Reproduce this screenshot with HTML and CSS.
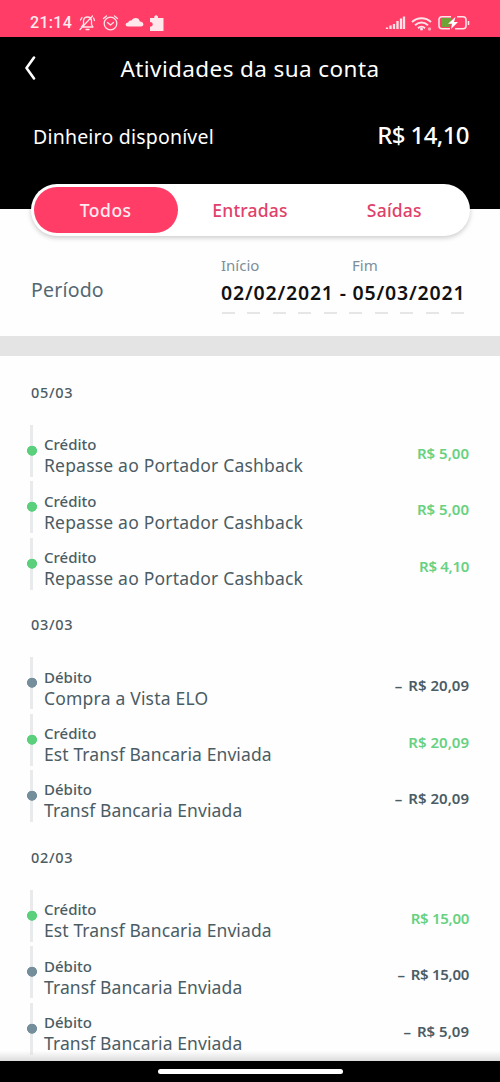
FILE: index.html
```html
<!DOCTYPE html>
<html lang="pt-BR">
<head>
<meta charset="utf-8">
<title>Atividades da sua conta</title>
<link rel="stylesheet" href="styles.css">
</head>
<body>
<div class="screen">
  <div class="status">
    <span class="clock">21:14</span>
    <svg class="status-left" width="88" height="20" viewBox="0 0 88 20" fill="none" stroke="#ffe3e9" stroke-width="1.3" stroke-linecap="round" stroke-linejoin="round">
      <path d="M3.5 14h11.5l-1.5-2.5V8c0-2.5-1.500-4-4-4S5.500 5.500 5.500 8v3.500zM8 16.500h3M2.500 7l1.500-2.500M15.500 5l1 2.500M2 16.500 14.500 3"/>
      <circle cx="32.500" cy="10.500" r="6.300"/>
      <path d="M29.500 9.500l3 2.500 3-2.500M25.500 5.500l3-2.500M36.500 3l3 2.500"/>
      <path fill="#ffe8ec" stroke="none" d="M50 13.500c-3 0-3.300-3.800.2-4 .3-1.800 2-2.500 3.300-1.900C55.500 4 61.300 4.300 61.800 8.500c4.500.2 4.700 5 1.200 5z"/>
      <path fill="#ffe8ec" stroke="none" d="M72 5h4.300C75.500 1.200 80.700 1.200 80 5h5.500v13H72v-4.300c3.700 0 3.700-4.700 0-4.700z"/>
    </svg>
    <svg class="status-right" width="86" height="18" viewBox="0 0 86 18">
      <path stroke="#ffe3e9" stroke-width="2.300" d="M2 14v-1.500M5.500 14v-3.500M9 14V9M12.500 14V6M16 14V3.500M19 14V1.500"/>
      <g fill="none" stroke="#ffe3e9" stroke-width="2"><path d="M27 7c5.500-5 13.500-5 19 0M30 10.300c4-3.400 9-3.400 13 0M33 13.200c2-2 5-2 7 0"/></g>
      <circle cx="36.500" cy="14" r="1.500" fill="#ffe3e9"/><circle cx="44.500" cy="14" r="1.700" fill="#ffa7b9"/>
      <path d="M57 3h10l-3 9h-7z" fill="#6ea337"/>
      <path d="M66 1.700H57q-3 0-3 3v6q0 3 3 3h8M70 13.700h8q3 0 3-3v-6q0-3-3-3h-6M83.500 6v4" fill="none" stroke="#ffe3e9" stroke-width="1.600"/>
      <path d="M70.500 2 63 8.800h4L66 14l7-7h-4z" fill="#fff"/>
    </svg>
  </div>
  <header class="header">
    <div class="title-row">
      <svg class="back" width="12" height="24" viewBox="0 0 12 24"><path d="M10 1.500 2.500 12 10 22.500" fill="none" stroke="#fff" stroke-width="2.600" stroke-linecap="round" stroke-linejoin="round"/></svg>
      <h1 class="title">Atividades da sua conta</h1>
    </div>
    <div class="balance-row"><span class="balance-label">Dinheiro disponível</span><span class="balance">R$ 14,10</span></div>
  </header>
  <nav class="tabs"><span class="tab active">Todos</span><span class="tab">Entradas</span><span class="tab">Saídas</span></nav>
  <section class="period">
    <span class="period-label">Período</span>
    <div class="range">
      <div class="range-labels"><span class="start">Início</span><span class="end">Fim</span></div>
      <div class="dates">02/02/2021 - 05/03/2021</div>
      <div class="dashes"></div>
    </div>
  </section>
  <main class="list">
    <section class="group">
      <h2 class="day">05/03</h2>
      <div class="row credit"><i class="rail"></i><div class="info"><span class="kind">Crédito</span><span class="desc">Repasse ao Portador Cashback</span></div><span class="amount">R$ 5,00</span></div>
      <div class="row credit"><i class="rail"></i><div class="info"><span class="kind">Crédito</span><span class="desc">Repasse ao Portador Cashback</span></div><span class="amount">R$ 5,00</span></div>
      <div class="row credit"><i class="rail"></i><div class="info"><span class="kind">Crédito</span><span class="desc">Repasse ao Portador Cashback</span></div><span class="amount narrow">R$ 4,10</span></div>
    </section>
    <section class="group">
      <h2 class="day">03/03</h2>
      <div class="row"><i class="rail"></i><div class="info"><span class="kind">Débito</span><span class="desc">Compra a Vista ELO</span></div><span class="amount"><span class="minus">–</span>R$ 20,09</span></div>
      <div class="row credit"><i class="rail"></i><div class="info"><span class="kind">Crédito</span><span class="desc transfer">Est Transf Bancaria Enviada</span></div><span class="amount">R$ 20,09</span></div>
      <div class="row"><i class="rail"></i><div class="info"><span class="kind">Débito</span><span class="desc transfer">Transf Bancaria Enviada</span></div><span class="amount"><span class="minus">–</span>R$ 20,09</span></div>
    </section>
    <section class="group">
      <h2 class="day">02/03</h2>
      <div class="row credit"><i class="rail"></i><div class="info"><span class="kind">Crédito</span><span class="desc transfer">Est Transf Bancaria Enviada</span></div><span class="amount narrow">R$ 15,00</span></div>
      <div class="row"><i class="rail"></i><div class="info"><span class="kind">Débito</span><span class="desc transfer">Transf Bancaria Enviada</span></div><span class="amount narrow"><span class="minus">–</span>R$ 15,00</span></div>
      <div class="row"><i class="rail"></i><div class="info"><span class="kind">Débito</span><span class="desc transfer">Transf Bancaria Enviada</span></div><span class="amount"><span class="minus">–</span>R$ 5,09</span></div>
    </section>
  </main>
  <footer class="home"><i class="home-bar"></i></footer>
</div>
</body>
</html>
```

FILE: styles.css
```css
* { box-sizing: border-box; }
body { margin: 0; background: #fff; font-family: "Noto Sans", sans-serif; color: #4b5c64; }
.screen { width: 500px; height: 1082px; overflow: hidden; display: flex; flex-direction: column; background: #fefefe; }
.screen > * { flex-shrink: 0; }
.status { height: 37px; padding: 8px 29px 0 30px; background: #ff3d67; display: flex; align-items: flex-start; }
.clock { width: 48px; font: 500 16px/30px Roboto, sans-serif; letter-spacing: .3px; color: #ffeaee; }
.status-left { margin-top: 5px; }
.status-right { margin: 7px 0 0 auto; }
.header { height: 172px; background: #000; color: #fff; }
.title-row { height: 62px; display: grid; grid-template-columns: 96px 308px 96px; align-items: center; }
.back { margin-left: 24px; margin-top: -1px; }
.title { margin: 0; text-align: center; font-size: 22.500px; font-weight: 400; letter-spacing: .4px; white-space: nowrap; }
.balance-row { height: 72px; padding: 0 31px 0 33px; display: flex; align-items: center; justify-content: space-between; }
.balance-label { font-size: 19.500px; letter-spacing: .2px; padding-top: 3px; }
.balance { font-size: 24px; font-weight: 500; letter-spacing: -.6px; margin-top: -2px; }
.tabs { position: relative; width: 439px; height: 52px; margin: -25px 0 0 30.500px; padding: 3px; border-radius: 26px; background: #fff; box-shadow: 0 2px 5px #0003; display: grid; grid-template-columns: repeat(3, 1fr); color: #df416b; font-size: 17.500px; font-weight: 500; letter-spacing: .2px; text-align: center; line-height: 47px; }
.tab.active { height: 46px; background: #ff3d67; border-radius: 23px; color: #ffeaf0; letter-spacing: .5px; }
.period { height: 120px; padding: 17px 35px 0 31px; border-bottom: 20px solid #e4e4e4; display: flex; justify-content: space-between; }
.period-label { font-size: 19.500px; line-height: 26px; margin-top: 24px; color: #536872; letter-spacing: .2px; }
.range { width: 244px; }
.range-labels { display: grid; grid-template-columns: 131px 1fr; font-size: 15px; line-height: 24px; color: #7b8f9b; }
.dates { font-size: 19.500px; font-weight: 600; line-height: 32px; letter-spacing: .8px; color: #111; white-space: nowrap; }
.dashes { height: 2px; margin-top: 3px; background: repeating-linear-gradient(90deg, transparent 0 1px, #e6e6e6 1px 14px, transparent 14px 25.500px); }
.list { height: 705px; padding: 5.800px 31px 0 27px; overflow: hidden; position: relative; }
.list::after { content: ""; position: absolute; left: 0; right: 0; bottom: 0; height: 10px; background: linear-gradient(transparent, #dcdcdc); }
.group { height: 232.500px; }
.day { margin: 0 0 0 4px; height: 63.200px; line-height: 60px; font-size: 14.500px; font-weight: 500; letter-spacing: .7px; }
.row { height: 56.400px; display: grid; grid-template-columns: 17px 1fr auto; align-items: start; }
.rail { width: 10px; height: 52px; background: radial-gradient(circle at 5px 25.700px, #758e9b 4.700px, transparent 5.300px), linear-gradient(90deg, transparent 3.500px, #e8eaeb 3.500px 6.500px, transparent 6.500px); }
.credit .rail { background: radial-gradient(circle at 5px 25.700px, #5bd07c 4.700px, transparent 5.300px), linear-gradient(90deg, transparent 3.500px, #e8eaeb 3.500px 6.500px, transparent 6.500px); }
.info { padding-top: 9.200px; display: flex; flex-direction: column; line-height: 21px; white-space: nowrap; }
.kind { font-size: 15px; font-weight: 500; }
.desc { font-size: 17.500px; letter-spacing: .2px; }
.transfer { letter-spacing: .1px; }
.amount { padding-top: 18px; font-size: 15px; font-weight: 600; line-height: 21px; white-space: nowrap; }
.narrow { letter-spacing: -.3px; }
.minus { margin-right: 6px; }
.credit .amount { color: #67d181; }
.home { height: 21px; background: #000; display: flex; justify-content: center; padding-top: 8px; }
.home-bar { width: 185px; height: 5px; border-radius: 3px; background: #fff; }
```
